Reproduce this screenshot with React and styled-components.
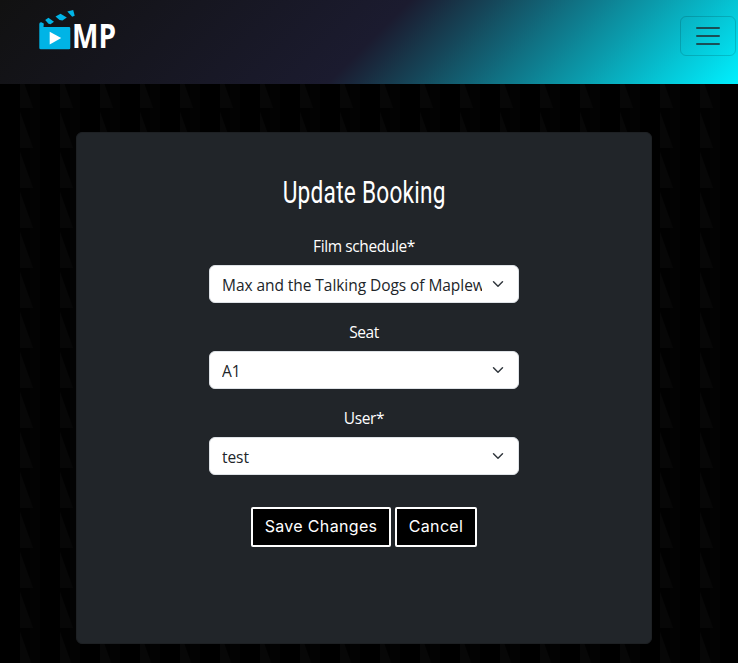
import React from "react";
import styled, { createGlobalStyle } from "styled-components";

const GlobalStyle = createGlobalStyle`
  *, *::before, *::after { box-sizing: border-box; }
  body {
    margin: 0;
    color: #fff;
    font: 15.5px/24px "Open Sans", "Noto Sans", sans-serif;
    background-color: #000;
  }
`;

const Page = styled.div`
  min-height: 663px;
  display: flex;
  flex-direction: column;
  background: #000
    url("data:image/svg+xml,%3Csvg xmlns='http://www.w3.org/2000/svg' width='40' height='40'%3E%3Cpath d='M20 0h10v40H20z' fill='%23010101'/%3E%3Cpath d='M30 0h10v40H30z' fill='%23030303'/%3E%3Cpath d='M20 -8L33 28H20zM20 32L33 68H20z' fill='%23070707'/%3E%3C/svg%3E");
`;

const Navbar = styled.header`
  height: 84px;
  display: flex;
  align-items: flex-start;
  justify-content: space-between;
  padding: 0 2px 0 38px;
  background: linear-gradient(135deg, #111 0%, #1b1b2f 50%, #00f0ff 100%);
`;

const Logo = styled.a`
  display: block;
  svg { display: block; overflow: visible; }
`;

const Toggler = styled.button`
  width: 56px;
  height: 40px;
  margin-top: 16px;
  padding: 4px 12px;
  border: 1px solid rgba(0, 0, 0, 0.15);
  border-radius: 6px;
  background: transparent;
  svg { display: block; }
`;

const Card = styled.main`
  width: 576px;
  height: 512px;
  margin: 48px 0 0 76px;
  padding: 41px 0 0;
  display: flex;
  flex-direction: column;
  align-items: center;
  border: 1px solid #1d2023;
  border-radius: 6px;
  background: #212529;
`;

const Title = styled.h1`
  margin: 0 0 21px;
  font: 400 31px/38px Roboto, sans-serif;
  letter-spacing: 0.35px;
  white-space: nowrap;
  transform: translateX(0.5px) scaleX(0.73);
`;

const Field = styled.div`
  width: 310px;
  margin-bottom: 16px;
  display: flex;
  flex-direction: column;
`;

const Label = styled.label`
  padding-top: 1px;
  margin-bottom: 7px;
  text-align: center;
  letter-spacing: -0.4px;
`;

const Select = styled.select`
  appearance: none;
  width: 100%;
  height: 38px;
  padding: 7px 36px 5px 12px;
  border: 1px solid #dee2e6;
  border-radius: 6px;
  color: #212529;
  font: inherit;
  letter-spacing: -0.06px;
  background: #fff
    url("data:image/svg+xml,%3Csvg xmlns='http://www.w3.org/2000/svg' viewBox='0 0 16 16'%3E%3Cpath fill='none' stroke='%23343a40' stroke-linecap='round' stroke-linejoin='round' stroke-width='2' d='m2 5 6 6 6-6'/%3E%3C/svg%3E")
    no-repeat right 12px center / 16px 12px;
`;

const Actions = styled.div`
  display: flex;
  gap: 4px;
  margin-top: 16px;
`;

const Button = styled.button`
  width: ${(p) => p.$width}px;
  height: 40px;
  padding: 0 0 2px;
  border: 2px solid #fff;
  border-radius: 2px;
  background: #000;
  color: #fff;
  font: 400 16px/24px Inter, sans-serif;
  letter-spacing: 0.33px;
  white-space: nowrap;
`;

const fields = [
  { id: "schedule", label: "Film schedule*", value: "Max and the Talking Dogs of Maplewood" },
  { id: "seat", label: "Seat", value: "A1" },
  { id: "user", label: "User*", value: "test" },
];

function BrandMark() {
  return (
    <svg width="80" height="60" viewBox="38 0 80 60" role="img" aria-label="MP">
      <g fill="#00b4e6">
        <path d="M39.3 24q0-2 2-1.800l2.500 1.400-.3 3.400H69q1.300 0 1.300 1.300v19.400q0 1.500-1.500 1.500H40.800q-1.500 0-1.500-1.500z" />
        <path d="M45.200 20l3.200-2.300 5.600 4-3.500 2.600-2-.5z" />
        <path d="M55.500 16.500l5-2.700 6.300 3.700-4.300 3-3-.4z" />
        <path d="M67.300 11.600l5.900-1.500 1.500 5.700-2.500.9z" />
      </g>
      <path d="M49.700 31.700v12.800L61.200 38z" fill="#fff" />
      <text
        x="72"
        y="48"
        fill="#fff"
        fontFamily="'Open Sans', 'Noto Sans', sans-serif"
        fontWeight="700"
        fontSize="33.500"
        textLength="44"
        lengthAdjust="spacingAndGlyphs"
      >
        MP
      </text>
    </svg>
  );
}

export default function App() {
  return (
    <>
      <GlobalStyle />
      <Page>
        <Navbar>
          <Logo>
            <BrandMark />
          </Logo>
          <Toggler aria-label="Toggle navigation">
            <svg width="30" height="30" viewBox="0 0 30 30">
              <path d="M4 7h22M4 15h22M4 23h22" stroke="rgba(33,37,41,0.75)" strokeWidth="2" strokeLinecap="round" />
            </svg>
          </Toggler>
        </Navbar>
        <Card>
          <Title>Update Booking</Title>
          {fields.map((f) => (
            <Field key={f.id}>
              <Label htmlFor={f.id}>{f.label}</Label>
              <Select id={f.id}>
                <option>{f.value}</option>
              </Select>
            </Field>
          ))}
          <Actions>
            <Button $width={140}>Save Changes</Button>
            <Button $width={82}>Cancel</Button>
          </Actions>
        </Card>
      </Page>
    </>
  );
}
